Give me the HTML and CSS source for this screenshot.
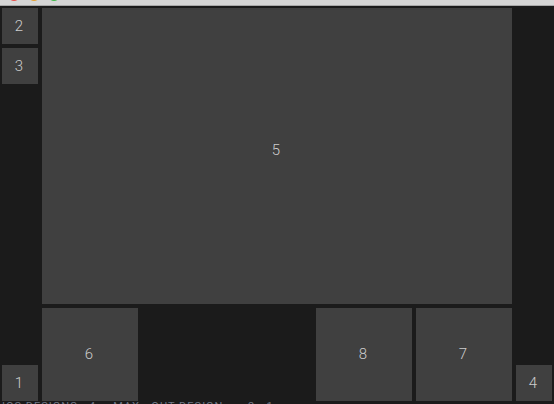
FILE: index.html
```html
<!DOCTYPE html>
<html>
<head>
<meta charset="utf-8">
<link rel="stylesheet" href="styles.css">
</head>
<body>
<div class="chrome">
  <span class="light red"></span>
  <span class="light amber"></span>
  <span class="light green"></span>
</div>
<div class="app">
  <div class="side">
    <div class="box small">2</div>
    <div class="box small">3</div>
    <div class="box small push">1</div>
  </div>
  <div class="center">
    <div class="box main">5</div>
    <div class="bottom">
      <div class="box tile">6</div>
      <div class="spacer"></div>
      <div class="box tile">8</div>
      <div class="box tile">7</div>
    </div>
  </div>
  <div class="side">
    <div class="box small push">4</div>
  </div>
</div>
<div class="footer">IOS DESIGNS · 4 — MAX · OUT DESIGN — · 2 · 1</div>
</body>
</html>
```

FILE: styles.css
```css
html, body {
  margin: 0;
  padding: 0;
  background: #1b1b1b;
  overflow: hidden;
}
body {
  width: 554px;
  height: 404px;
  font-family: Roboto, "Noto Sans", sans-serif;
}
.chrome {
  position: relative;
  height: 5px;
  background: #d6d6d6;
  border-bottom: 1px solid #a9a9a9;
}
.light {
  position: absolute;
  top: -11px;
  width: 12px;
  height: 12px;
  border-radius: 50%;
}
.red { left: 8px; background: #e8514a; }
.amber { left: 28px; background: #e5a030; }
.green { left: 48px; background: #3fb94a; }
.app {
  display: flex;
  gap: 4px;
  padding: 2px 2px 0;
  height: 393px;
}
.side {
  width: 36px;
  display: flex;
  flex-direction: column;
  gap: 4px;
}
.push { margin-top: auto; }
.center {
  width: 470px;
  display: flex;
  flex-direction: column;
  gap: 4px;
}
.box {
  background: #404040;
  color: #cdcdcd;
  font-size: 15px;
  font-weight: 300;
  display: flex;
  align-items: center;
  justify-content: center;
  padding-right: 2px;
  box-sizing: border-box;
}
.small { height: 36px; }
.main { height: 296px; padding-bottom: 13px; }
.tile { padding-bottom: 2px; }
.bottom {
  flex: 1;
  display: flex;
  gap: 4px;
}
.tile { width: 96px; }
.spacer { flex: 1; }
.footer {
  margin-top: 0;
  padding-left: 2px;
  font-size: 11px;
  line-height: 11px;
  color: #6f7786;
  letter-spacing: 1px;
  white-space: nowrap;
}
```
